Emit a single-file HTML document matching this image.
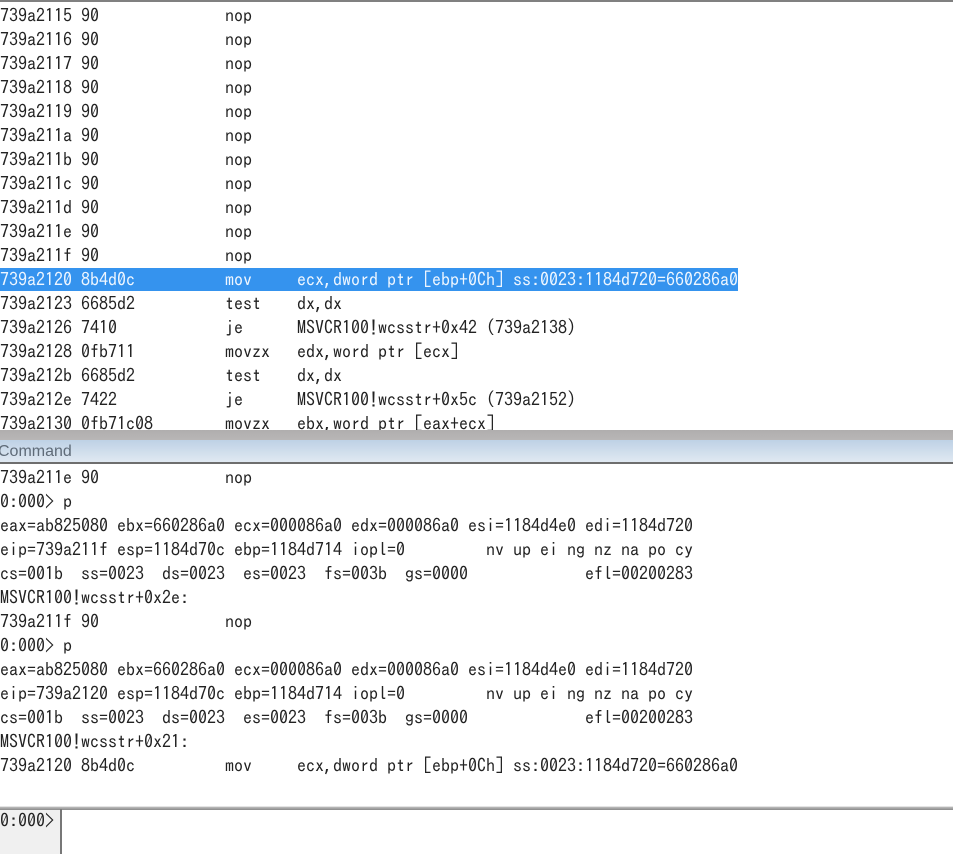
<!DOCTYPE html>
<html><head><meta charset="utf-8">
<style>
html,body{margin:0;padding:0;background:#fff}
body{width:953px;height:854px;position:relative;overflow:hidden;font-family:"IPAGothic","Liberation Mono",monospace;font-size:18px;color:#222}
.l{position:absolute;left:0;height:24px;line-height:24px;white-space:pre;font-size:18px;transform:translateY(1px)}
#top{position:absolute;left:0;top:0;width:953px;height:430px;overflow:hidden}
#hl{position:absolute;left:0;top:268px;width:738px;height:23px;background:#3593ee}
.w{color:#eef6ff}
.b{position:absolute;left:0;width:953px}
</style></head><body>
<div id="top">
<div class="b" style="top:0;height:2px;background:#808080"></div>
<div id="hl"></div>
<div class="l" style="top:3px">739a2115 90              nop</div>
<div class="l" style="top:27px">739a2116 90              nop</div>
<div class="l" style="top:51px">739a2117 90              nop</div>
<div class="l" style="top:75px">739a2118 90              nop</div>
<div class="l" style="top:99px">739a2119 90              nop</div>
<div class="l" style="top:123px">739a211a 90              nop</div>
<div class="l" style="top:147px">739a211b 90              nop</div>
<div class="l" style="top:171px">739a211c 90              nop</div>
<div class="l" style="top:195px">739a211d 90              nop</div>
<div class="l" style="top:219px">739a211e 90              nop</div>
<div class="l" style="top:243px">739a211f 90              nop</div>
<div class="l w" style="top:267px">739a2120 8b4d0c          mov     ecx,dword ptr [ebp+0Ch] ss:0023:1184d720=660286a0</div>
<div class="l" style="top:291px">739a2123 6685d2          test    dx,dx</div>
<div class="l" style="top:315px">739a2126 7410            je      MSVCR100!wcsstr+0x42 (739a2138)</div>
<div class="l" style="top:339px">739a2128 0fb711          movzx   edx,word ptr [ecx]</div>
<div class="l" style="top:363px">739a212b 6685d2          test    dx,dx</div>
<div class="l" style="top:387px">739a212e 7422            je      MSVCR100!wcsstr+0x5c (739a2152)</div>
<div class="l" style="top:411px">739a2130 0fb71c08        movzx   ebx,word ptr [eax+ecx]</div>
</div>
<div class="b" style="top:430px;height:10px;background:linear-gradient(#b0aeae,#b8b6b6)"></div>
<div class="b" style="top:440px;height:22px;background:linear-gradient(#bed1e5,#e0e9f2);color:#5f6b78;font:16px/24px 'Liberation Sans',sans-serif"><span style="position:absolute;left:-2px;top:0">Command</span></div>
<div class="b" style="top:462px;height:2px;background:#6e6e6e"></div>
<div class="l" style="top:465px">739a211e 90              nop</div>
<div class="l" style="top:489px">0:000&gt; p</div>
<div class="l" style="top:513px">eax=ab825080 ebx=660286a0 ecx=000086a0 edx=000086a0 esi=1184d4e0 edi=1184d720</div>
<div class="l" style="top:537px">eip=739a211f esp=1184d70c ebp=1184d714 iopl=0         nv up ei ng nz na po cy</div>
<div class="l" style="top:561px">cs=001b  ss=0023  ds=0023  es=0023  fs=003b  gs=0000             efl=00200283</div>
<div class="l" style="top:585px">MSVCR100!wcsstr+0x2e:</div>
<div class="l" style="top:609px">739a211f 90              nop</div>
<div class="l" style="top:633px">0:000&gt; p</div>
<div class="l" style="top:657px">eax=ab825080 ebx=660286a0 ecx=000086a0 edx=000086a0 esi=1184d4e0 edi=1184d720</div>
<div class="l" style="top:681px">eip=739a2120 esp=1184d70c ebp=1184d714 iopl=0         nv up ei ng nz na po cy</div>
<div class="l" style="top:705px">cs=001b  ss=0023  ds=0023  es=0023  fs=003b  gs=0000             efl=00200283</div>
<div class="l" style="top:729px">MSVCR100!wcsstr+0x21:</div>
<div class="l" style="top:753px">739a2120 8b4d0c          mov     ecx,dword ptr [ebp+0Ch] ss:0023:1184d720=660286a0</div>
<div class="b" style="top:806px;height:1px;background:#e4e4e4"></div>
<div class="b" style="top:807px;height:3px;background:linear-gradient(#bdbdbd,#8a8a8a)"></div>
<div style="position:absolute;left:0;top:810px;width:60px;height:44px;background:#f0f0f0"></div>
<div style="position:absolute;left:60px;top:809px;width:2px;height:45px;background:#777"></div>
<div class="l" style="top:808px">0:000&gt;</div>
</body></html>
